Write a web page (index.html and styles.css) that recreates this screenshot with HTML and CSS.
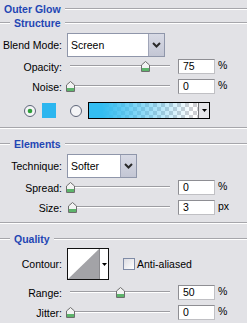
FILE: index.html
```html
<!DOCTYPE html>
<html>
<head>
<meta charset="utf-8">
<link rel="stylesheet" href="styles.css">
</head>
<body>
<div class="panel">
  <div class="head head-top"><span class="title">Outer Glow</span><span class="rule"></span></div>
  <div class="head"><span class="rule lead"></span><span class="title">Structure</span><span class="rule"></span></div>

  <div class="row row-blend">
    <span class="lbl">Blend Mode:</span>
    <div class="select select-blend"><span class="val">Screen</span><span class="drop"><svg width="9" height="6" viewBox="0 0 9 6"><path d="M1 1 L4.5 4.5 L8 1" fill="none" stroke="#2a2a2a" stroke-width="2"/></svg></span></div>
  </div>

  <div class="row row-slider row-first">
    <span class="lbl">Opacity:</span>
    <div class="slider"><span class="track"></span><span class="thumb" style="--v:75"><svg width="9" height="11" viewBox="0 0 9 11"><path d="M4.5 0.5 L8.5 4 V10.5 H0.5 V4 Z" fill="#f3f3f3" stroke="#6e6e6e"/><rect x="1" y="7" width="7" height="3" fill="#5db46b"/></svg></span></div>
    <span class="num">75</span><span class="unit">%</span>
  </div>
  <div class="row row-slider">
    <span class="lbl">Noise:</span>
    <div class="slider"><span class="track"></span><span class="thumb" style="--v:0"><svg width="9" height="11" viewBox="0 0 9 11"><path d="M4.5 0.5 L8.5 4 V10.5 H0.5 V4 Z" fill="#f3f3f3" stroke="#6e6e6e"/><rect x="1" y="7" width="7" height="3" fill="#5db46b"/></svg></span></div>
    <span class="num">0</span><span class="unit">%</span>
  </div>

  <div class="colors">
    <svg class="radio" width="12" height="12" viewBox="0 0 12 12"><circle cx="6" cy="6" r="5.5" fill="#f4f4f6" stroke="#5d6478"/><circle cx="6" cy="6" r="2.3" fill="#2f9f3a"/></svg>
    <span class="swatch"></span>
    <svg class="radio radio-2" width="12" height="12" viewBox="0 0 12 12"><circle cx="6" cy="6" r="5.5" fill="#f4f4f6" stroke="#5d6478"/></svg>
    <div class="gradient"><span class="grad-fill"></span><span class="grad-drop"><svg width="5" height="3" viewBox="0 0 5 3"><path d="M0 0 H5 L2.5 3 Z" fill="#000"/></svg></span></div>
  </div>

  <div class="sep"></div>

  <div class="head head-sec"><span class="rule lead"></span><span class="title">Elements</span><span class="rule"></span></div>

  <div class="row row-blend">
    <span class="lbl">Technique:</span>
    <div class="select select-tech"><span class="val">Softer</span><span class="drop"><svg width="9" height="6" viewBox="0 0 9 6"><path d="M1 1 L4.5 4.5 L8 1" fill="none" stroke="#2a2a2a" stroke-width="2"/></svg></span></div>
  </div>

  <div class="row row-slider row-spread">
    <span class="lbl">Spread:</span>
    <div class="slider"><span class="track"></span><span class="thumb" style="--v:0"><svg width="9" height="11" viewBox="0 0 9 11"><path d="M4.5 0.5 L8.5 4 V10.5 H0.5 V4 Z" fill="#f3f3f3" stroke="#6e6e6e"/><rect x="1" y="7" width="7" height="3" fill="#5db46b"/></svg></span></div>
    <span class="num">0</span><span class="unit">%</span>
  </div>
  <div class="row row-slider">
    <span class="lbl">Size:</span>
    <div class="slider"><span class="track"></span><span class="thumb" style="--v:2"><svg width="9" height="11" viewBox="0 0 9 11"><path d="M4.5 0.5 L8.5 4 V10.5 H0.5 V4 Z" fill="#f3f3f3" stroke="#6e6e6e"/><rect x="1" y="7" width="7" height="3" fill="#5db46b"/></svg></span></div>
    <span class="num">3</span><span class="unit">px</span>
  </div>

  <div class="sep sep-2"></div>

  <div class="head head-sec"><span class="rule lead"></span><span class="title">Quality</span><span class="rule"></span></div>

  <div class="row row-contour">
    <span class="lbl">Contour:</span>
    <div class="contour">
      <svg class="curve" width="31" height="30" viewBox="0 0 31 30"><rect width="31" height="30" fill="#fff"/><path d="M0 30 L31 0 V30 Z" fill="#a3a3a7"/></svg>
      <span class="cdrop"><svg width="5" height="3" viewBox="0 0 5 3"><path d="M0 0 H5 L2.5 3 Z" fill="#000"/></svg></span>
    </div>
    <span class="check"></span><span class="check-lbl">Anti-aliased</span>
  </div>

  <div class="row row-slider row-range">
    <span class="lbl">Range:</span>
    <div class="slider"><span class="track"></span><span class="thumb" style="--v:50"><svg width="9" height="11" viewBox="0 0 9 11"><path d="M4.5 0.5 L8.5 4 V10.5 H0.5 V4 Z" fill="#f3f3f3" stroke="#6e6e6e"/><rect x="1" y="7" width="7" height="3" fill="#5db46b"/></svg></span></div>
    <span class="num">50</span><span class="unit">%</span>
  </div>
  <div class="row row-slider">
    <span class="lbl">Jitter:</span>
    <div class="slider"><span class="track"></span><span class="thumb" style="--v:0"><svg width="9" height="11" viewBox="0 0 9 11"><path d="M4.5 0.5 L8.5 4 V10.5 H0.5 V4 Z" fill="#f3f3f3" stroke="#6e6e6e"/><rect x="1" y="7" width="7" height="3" fill="#5db46b"/></svg></span></div>
    <span class="num">0</span><span class="unit">%</span>
  </div>
</div>
</body>
</html>
```
FILE: styles.css
```css
* { box-sizing: border-box; margin: 0; padding: 0; }
html, body { background: #e2e2e6; }
body {
  width: 247px;
  height: 323px;
  overflow: hidden;
  font-family: "Liberation Sans", Arial, sans-serif;
  font-size: 10.5px;
  color: #000;
}
.panel { display: flex; flex-direction: column; }

.head { display: flex; align-items: center; height: 14px; gap: 4px; }
.head-top { margin-top: 2px; padding-left: 4px; }
.head-sec { margin-top: 8px; }
.title { font-weight: bold; color: #1f46b4; white-space: nowrap; }
.rule { flex: 1; height: 2px; border-top: 1px solid #a6a6ab; border-bottom: 1px solid #fff; }
.rule.lead { flex: 0 0 10px; }

.row { display: flex; align-items: center; }
.lbl { width: 62px; flex: none; text-align: right; white-space: nowrap; }

.row-blend { margin-top: 3px; height: 24px; }
.select {
  display: flex;
  height: 24px;
  margin-left: 5px;
  background: #fff;
  border: 1px solid #8f96aa;
}
.select-blend { width: 98px; }
.select-tech { width: 70px; }
.select .val { flex: 1; padding-left: 3px; line-height: 22px; }
.select .drop {
  width: 16px;
  display: flex;
  align-items: center;
  justify-content: center;
  background: linear-gradient(#d8dae5, #c3c6d4);
  border-left: 1px solid #a0a5b8;
}

.row-slider { height: 15px; margin-top: 5px; }
.row-first { margin-top: 2px; }
.row-spread { margin-top: 2px; }
.row-range { margin-top: 5px; }
.slider { position: relative; width: 108px; height: 15px; margin-left: 5px; flex: none; }
.track {
  position: absolute;
  left: 3px;
  right: 5px;
  top: 6px;
  height: 2px;
  border-top: 1px solid #9d9da2;
  border-bottom: 1px solid #fff;
}
.thumb { position: absolute; top: 2px; width: 9px; height: 11px; left: calc(var(--v) * 1px - 1px); }
.thumb svg { display: block; }
.num {
  width: 37px;
  height: 15px;
  margin-left: 3px;
  padding-left: 4px;
  line-height: 13px;
  background: #fff;
  border: 1px solid #c0c0c4;
  border-top-color: #8e8e93;
  border-left-color: #8e8e93;
}
.unit { margin-left: 3px; margin-top: -3px; }

.colors { display: flex; align-items: center; height: 17px; margin-top: 8px; padding-left: 24px; }
.radio { display: block; flex: none; }
.swatch { width: 14px; height: 15px; margin-left: 6px; background: #2cb6ef; }
.radio-2 { margin-left: 14px; }
.gradient { display: flex; width: 122px; height: 17px; margin-left: 6px; border: 1px solid #000; }
.grad-fill {
  flex: 1;
  background:
    linear-gradient(to right, #33bdf1 0%, #33bdf1 12%, rgba(51, 189, 241, 0.55) 50%, rgba(51, 189, 241, 0) 95%),
    repeating-conic-gradient(#ffffff 0 25%, #cfd0d4 0 50%) 0 0 / 8px 8px;
}
.grad-drop {
  width: 11px;
  display: flex;
  align-items: center;
  justify-content: center;
  background: #e4e4e8;
  border-left: 1px solid #7a7a7e;
}

.sep { height: 2px; margin-top: 8px; border-top: 1px solid #a6a6ab; border-bottom: 1px solid #fff; }
.sep-2 { margin-top: 7px; }

.row-contour { height: 32px; margin-top: 2px; }
.contour { display: flex; width: 42px; height: 32px; margin-left: 5px; border: 1px solid #111; background: #fff; }
.curve { display: block; }
.cdrop { flex: 1; display: flex; align-items: center; justify-content: center; border-left: 1px solid #8a8a8e; }
.check {
  width: 12px;
  height: 12px;
  margin-left: 14px;
  border: 1px solid #7f8ba6;
  background: linear-gradient(135deg, #dcdce2, #ffffff);
}
.check-lbl { margin-left: 2px; }
```
